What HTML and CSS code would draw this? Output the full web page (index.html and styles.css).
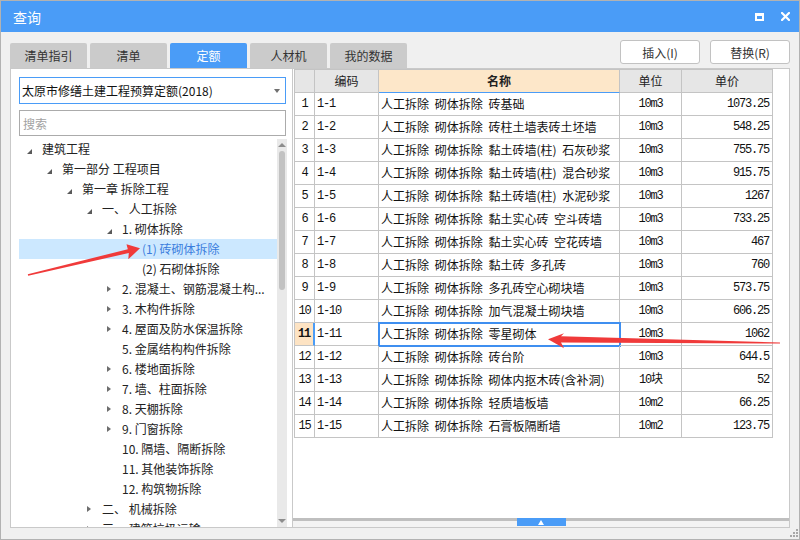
FILE: index.html
```html
<!DOCTYPE html>
<html lang="zh-CN">
<head>
<meta charset="utf-8">
<title>查询</title>
<link rel="stylesheet" href="styles.css">
</head>
<body>
<div class="window">
  <div class="titlebar">
    <span class="title">查询</span>
    <div class="winbtns">
      <svg class="ico" width="9" height="8" viewBox="0 0 9 8"><path d="M0 0H9V8H0Z M2 3H7V6H2Z" fill="#fff" fill-rule="evenodd"/></svg>
      <svg class="ico" width="9" height="9" viewBox="0 0 9 9"><path d="M1 1L8 8M8 1L1 8" stroke="#fff" stroke-width="2.2" stroke-linecap="square"/></svg>
    </div>
  </div>
  <div class="main">
    <div class="toprow">
      <div class="tabs">
        <div class="tab">清单指引</div>
        <div class="tab">清单</div>
        <div class="tab active">定额</div>
        <div class="tab">人材机</div>
        <div class="tab">我的数据</div>
      </div>
      <div class="actions">
        <button class="btn">插入(I)</button>
        <button class="btn">替换(R)</button>
      </div>
    </div>
    <div class="panels">
      <div class="leftpanel">
        <div class="combo"><span class="combo-text">太原市修缮土建工程预算定额(2018)</span><span class="caret"></span></div>
        <div class="search">搜索</div>
        <div class="treewrap">
          <ul class="tree">
            <li class="node lv0"><span class="tw open"></span><span class="lbl">建筑工程</span></li>
            <li class="node lv1"><span class="tw open"></span><span class="lbl">第一部分 工程项目</span></li>
            <li class="node lv2"><span class="tw open"></span><span class="lbl">第一章 拆除工程</span></li>
            <li class="node lv3"><span class="tw open"></span><span class="lbl">一、 人工拆除</span></li>
            <li class="node lv4"><span class="tw open"></span><span class="lbl">1. 砌体拆除</span></li>
            <li class="node lv5 selected"><span class="tw"></span><span class="lbl">(1) 砖砌体拆除</span></li>
            <li class="node lv5"><span class="tw"></span><span class="lbl">(2) 石砌体拆除</span></li>
            <li class="node lv4"><span class="tw closed"></span><span class="lbl">2. 混凝土、钢筋混凝土构...</span></li>
            <li class="node lv4"><span class="tw closed"></span><span class="lbl">3. 木构件拆除</span></li>
            <li class="node lv4"><span class="tw closed"></span><span class="lbl">4. 屋面及防水保温拆除</span></li>
            <li class="node lv4"><span class="tw"></span><span class="lbl">5. 金属结构构件拆除</span></li>
            <li class="node lv4"><span class="tw closed"></span><span class="lbl">6. 楼地面拆除</span></li>
            <li class="node lv4"><span class="tw closed"></span><span class="lbl">7. 墙、柱面拆除</span></li>
            <li class="node lv4"><span class="tw closed"></span><span class="lbl">8. 天棚拆除</span></li>
            <li class="node lv4"><span class="tw closed"></span><span class="lbl">9. 门窗拆除</span></li>
            <li class="node lv4"><span class="tw"></span><span class="lbl">10. 隔墙、隔断拆除</span></li>
            <li class="node lv4"><span class="tw"></span><span class="lbl">11. 其他装饰拆除</span></li>
            <li class="node lv4"><span class="tw"></span><span class="lbl">12. 构筑物拆除</span></li>
            <li class="node lv3"><span class="tw closed"></span><span class="lbl">二、 机械拆除</span></li>
            <li class="node lv3"><span class="tw closed"></span><span class="lbl">三、 建筑垃圾运输</span></li>
          </ul>
          <div class="vscroll"><span class="sb-up"></span><span class="sb-thumb"></span><span class="sb-down"></span></div>
        </div>
      </div>
      <div class="rightpanel">
        <div class="gridarea">
          <div class="grid" role="grid">
            <div class="c h rn"></div><div class="c h code">编码</div><div class="c h name">名称</div><div class="c h unit">单位</div><div class="c h price">单价</div>

            <div class="c rn">1</div><div class="c code">1-1</div><div class="c name">人工拆除 砌体拆除 砖基础</div><div class="c unit">10m3</div><div class="c price">1073.25</div>
            <div class="c rn">2</div><div class="c code">1-2</div><div class="c name">人工拆除 砌体拆除 砖柱土墙表砖土坯墙</div><div class="c unit">10m3</div><div class="c price">548.25</div>
            <div class="c rn">3</div><div class="c code">1-3</div><div class="c name">人工拆除 砌体拆除 黏土砖墙(柱) 石灰砂浆</div><div class="c unit">10m3</div><div class="c price">755.75</div>
            <div class="c rn">4</div><div class="c code">1-4</div><div class="c name">人工拆除 砌体拆除 黏土砖墙(柱) 混合砂浆</div><div class="c unit">10m3</div><div class="c price">915.75</div>
            <div class="c rn">5</div><div class="c code">1-5</div><div class="c name">人工拆除 砌体拆除 黏土砖墙(柱) 水泥砂浆</div><div class="c unit">10m3</div><div class="c price">1267</div>
            <div class="c rn">6</div><div class="c code">1-6</div><div class="c name">人工拆除 砌体拆除 黏土实心砖 空斗砖墙</div><div class="c unit">10m3</div><div class="c price">733.25</div>
            <div class="c rn">7</div><div class="c code">1-7</div><div class="c name">人工拆除 砌体拆除 黏土实心砖 空花砖墙</div><div class="c unit">10m3</div><div class="c price">467</div>
            <div class="c rn">8</div><div class="c code">1-8</div><div class="c name">人工拆除 砌体拆除 黏土砖 多孔砖</div><div class="c unit">10m3</div><div class="c price">760</div>
            <div class="c rn">9</div><div class="c code">1-9</div><div class="c name">人工拆除 砌体拆除 多孔砖空心砌块墙</div><div class="c unit">10m3</div><div class="c price">573.75</div>
            <div class="c rn">10</div><div class="c code">1-10</div><div class="c name">人工拆除 砌体拆除 加气混凝土砌块墙</div><div class="c unit">10m3</div><div class="c price">606.25</div>
            <div class="c rn cur">11</div><div class="c code">1-11</div><div class="c name focus">人工拆除 砌体拆除 零星砌体</div><div class="c unit">10m3</div><div class="c price">1062</div>
            <div class="c rn">12</div><div class="c code">1-12</div><div class="c name">人工拆除 砌体拆除 砖台阶</div><div class="c unit">10m3</div><div class="c price">644.5</div>
            <div class="c rn">13</div><div class="c code">1-13</div><div class="c name">人工拆除 砌体拆除 砌体内抠木砖(含补洞)</div><div class="c unit">10块</div><div class="c price">52</div>
            <div class="c rn">14</div><div class="c code">1-14</div><div class="c name">人工拆除 砌体拆除 轻质墙板墙</div><div class="c unit">10m2</div><div class="c price">66.25</div>
            <div class="c rn">15</div><div class="c code">1-15</div><div class="c name">人工拆除 砌体拆除 石膏板隔断墙</div><div class="c unit">10m2</div><div class="c price">123.75</div>
          </div>
        </div>
        <div class="splitter"><div class="handle"><span class="handle-tri"></span></div></div>
      </div>
    </div>
  </div>
  <svg class="annot" width="800" height="540" viewBox="0 0 800 540">
    <polygon fill="#f03a3a" points="140,248.3 126.5,244.3 127.8,249.2 27.8,274.3 28.2,275.7 128.8,253 128.3,259.3"/>
    <polygon fill="#f03a3a" points="548,339.3 564,333.3 561,336.3 780,342.4 780,343.6 561,342.6 564,348.3"/>
  </svg>
  <svg class="grip" width="8" height="8" viewBox="0 0 8 8">
    <rect x="6" y="0" width="2" height="2" fill="#a8a8a8"/>
    <rect x="3" y="3" width="2" height="2" fill="#a8a8a8"/>
    <rect x="6" y="3" width="2" height="2" fill="#a8a8a8"/>
    <rect x="0" y="6" width="2" height="2" fill="#a8a8a8"/>
    <rect x="3" y="6" width="2" height="2" fill="#a8a8a8"/>
    <rect x="6" y="6" width="2" height="2" fill="#a8a8a8"/>
  </svg>
</div>
</body>
</html>
```
FILE: styles.css
```css
html, body {
  margin: 0;
  padding: 0;
}
body {
  width: 800px;
  height: 540px;
  overflow: hidden;
  font-family: "Noto Sans CJK SC", "Noto Sans", sans-serif;
  font-size: 12px;
  color: #222;
}
.window {
  position: relative;
  box-sizing: border-box;
  width: 800px;
  height: 540px;
  border: 1px solid #b2b2b2;
  background: #f0f0f0;
  display: flex;
  flex-direction: column;
}
.titlebar {
  flex: none;
  height: 31px;
  background: #4a9cf7;
  color: #fff;
  display: flex;
  align-items: center;
  justify-content: space-between;
  padding: 0 9px 0 12px;
  font-size: 14px;
}
.title { line-height: 1; }
.winbtns {
  display: flex;
  align-items: center;
  gap: 17px;
}
.ico { display: block; }

.main {
  flex: 1;
  display: flex;
  flex-direction: column;
  padding: 0 9px 0 9px;
}
.toprow {
  flex: none;
  height: 36px;
  display: flex;
  align-items: flex-end;
}
.tabs {
  display: flex;
  gap: 3px;
}
.tab {
  width: 77px;
  height: 25px;
  line-height: 25px;
  text-align: center;
  background: #cbcbcb;
  color: #333;
  border-radius: 2px 2px 0 0;
  font-size: 12px;
}
.tab.active {
  background: #4a9cf7;
  color: #fff;
}
.actions {
  margin-left: auto;
  align-self: flex-start;
  margin-top: 8px;
  display: flex;
  gap: 10px;
}
.btn {
  box-sizing: border-box;
  width: 80px;
  height: 24px;
  padding: 0;
  background: #fff;
  border: 1px solid #c2c2c2;
  border-radius: 3px;
  font-family: "Noto Sans CJK SC", sans-serif;
  font-size: 12px;
  color: #333;
}

.panels {
  flex: none;
  height: 460px;
  display: flex;
}
.leftpanel {
  box-sizing: border-box;
  width: 283px;
  height: 460px;
  border: 1px solid #c9c9c9;
  background: #fff;
  display: flex;
  flex-direction: column;
}
.combo {
  box-sizing: border-box;
  flex: none;
  height: 27px;
  margin: 8px 6px 0 8px;
  border: 1px solid #4a9cf7;
  display: flex;
  align-items: center;
  padding: 0 5px 0 2px;
  color: #111;
  font-size: 12px;
}
.combo-text { flex: 1; }
.caret {
  width: 0;
  height: 0;
  border-left: 3px solid transparent;
  border-right: 3px solid transparent;
  border-top: 4px solid #707070;
}
.search {
  box-sizing: border-box;
  flex: none;
  height: 26px;
  margin: 6px 6px 0 8px;
  border: 1px solid #ababab;
  padding-left: 3px;
  display: flex;
  align-items: center;
  color: #a2a2a2;
  font-size: 12px;
}
.treewrap {
  flex: 1;
  min-height: 0;
  margin-top: 3px;
  padding-right: 5px;
  display: flex;
  overflow: hidden;
}
.tree {
  flex: 1;
  list-style: none;
  margin: 0;
  padding: 0 0 0 8px;
  overflow: hidden;
}
.node {
  height: 20px;
  display: flex;
  align-items: center;
  white-space: nowrap;
  color: #222;
  font-size: 12px;
}
.node.selected {
  background: #cce8ff;
  color: #3b7ddd;
}
.lv1 { padding-left: 20px; }
.lv2 { padding-left: 40px; }
.lv3 { padding-left: 60px; }
.lv4 { padding-left: 80px; }
.lv5 { padding-left: 100px; }
.tw {
  flex: none;
  width: 23px;
  height: 20px;
  display: flex;
  align-items: center;
}
.tw.open::before {
  content: "";
  margin: 4px 0 0 8px;
  width: 0;
  height: 0;
  border-left: 5px solid transparent;
  border-bottom: 5px solid #5a5a5a;
}
.tw.closed::before {
  content: "";
  margin-left: 8px;
  width: 0;
  height: 0;
  border-top: 3.5px solid transparent;
  border-bottom: 3.5px solid transparent;
  border-left: 4px solid #6d6d6d;
}
.lbl { line-height: 20px; }

.vscroll {
  flex: none;
  width: 10px;
  background: #e9e9e9;
  display: flex;
  flex-direction: column;
  align-items: center;
}
.sb-up {
  margin-top: 4px;
  width: 0;
  height: 0;
  border-left: 4px solid transparent;
  border-right: 4px solid transparent;
  border-bottom: 4px solid #8d8d8d;
}
.sb-thumb {
  margin-top: 4px;
  width: 6px;
  height: 139px;
  border-radius: 3px;
  background: #c2c2c2;
}
.sb-down {
  margin-top: auto;
  margin-bottom: 4px;
  width: 0;
  height: 0;
  border-left: 4px solid transparent;
  border-right: 4px solid transparent;
  border-top: 4px solid #8d8d8d;
}

.rightpanel {
  box-sizing: border-box;
  flex: 1;
  height: 460px;
  border: 1px solid #c9c9c9;
  border-left: none;
  background: #fff;
  display: flex;
  flex-direction: column;
}
.gridarea {
  flex: 1;
  min-height: 0;
  padding-left: 1px;
  overflow: hidden;
}
.grid {
  display: grid;
  grid-template-columns: 20px 64px 241px 62px 91px;
  width: max-content;
  border-left: 1px solid #c4c4c4;
  border-top: 1px solid #c4c4c4;
}
.c {
  box-sizing: border-box;
  height: 23px;
  border-right: 1px solid #c4c4c4;
  border-bottom: 1px solid #c4c4c4;
  line-height: 22px;
  white-space: nowrap;
  overflow: hidden;
  color: #111;
  font-size: 12px;
}
.c.h {
  background: #e6e6e6;
  text-align: center;
  font-family: "Noto Sans CJK SC", sans-serif;
  letter-spacing: 0;
  padding: 0;
  color: #222;
}
.c.h.name {
  background: #fde7c9;
  font-weight: bold;
  border-bottom-color: #4a9cf7;
}
.rn {
  text-align: center;
  font-family: "Liberation Mono", monospace;
  letter-spacing: -1.2px;
}
.rn.cur {
  background: #fde3c3;
  font-weight: bold;
  border-right: 2px solid #4a9cf7;
}
.code {
  padding-left: 2px;
  font-family: "Liberation Mono", monospace;
  letter-spacing: -1.2px;
}
.name {
  padding-left: 2px;
  word-spacing: 3px;
}
.name.focus {
  outline: 2px solid #3f8ff0;
  outline-offset: -1px;
}
.unit {
  text-align: center;
  font-family: "Liberation Mono", "Noto Sans CJK SC", monospace;
  letter-spacing: -1.2px;
}
.price {
  text-align: right;
  padding-right: 3px;
  font-family: "Liberation Mono", monospace;
  letter-spacing: -1.2px;
}
.splitter {
  flex: none;
  height: 9px;
  background: linear-gradient(#bfbfbf 0 3px, #f3f3f3 3px);
  display: flex;
  justify-content: center;
}
.handle {
  width: 49px;
  height: 8px;
  background: #4a9cf7;
  display: flex;
  justify-content: center;
  align-items: center;
}
.handle-tri {
  width: 0;
  height: 0;
  border-left: 3px solid transparent;
  border-right: 3px solid transparent;
  border-bottom: 5px solid #fff;
}

.annot {
  position: absolute;
  left: -1px;
  top: -1px;
  pointer-events: none;
}
.grip {
  position: absolute;
  right: 1px;
  bottom: 2px;
}
```
